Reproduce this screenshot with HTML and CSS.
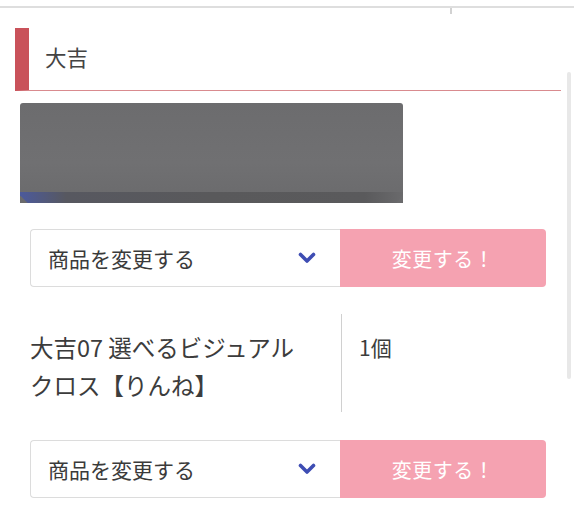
FILE: index.html
```html
<!DOCTYPE html>
<html lang="ja">
<head>
<meta charset="utf-8">
<link rel="stylesheet" href="styles.css">
</head>
<body>
<div class="page">
  <div class="topline"></div>
  <div class="scroll"></div>
  <div class="content">
    <h2 class="heading">大吉</h2>
    <div class="photo"><div class="photo-base"></div></div>
    <div class="change-row">
      <div class="select">
        <span>商品を変更する</span>
        <svg class="chev" width="18" height="12" viewBox="0 0 18 12"><polyline points="2.5,2.5 9,9 15.5,2.5" fill="none" stroke="#3e4db3" stroke-width="3.6" stroke-linecap="round" stroke-linejoin="round"/></svg>
      </div>
      <div class="button">変更する！</div>
    </div>
    <div class="item-row">
      <div class="item-name">大吉07 選べるビジュアルクロス【りんね】</div>
      <div class="item-qty">1個</div>
    </div>
    <div class="change-row second">
      <div class="select">
        <span>商品を変更する</span>
        <svg class="chev" width="18" height="12" viewBox="0 0 18 12"><polyline points="2.5,2.5 9,9 15.5,2.5" fill="none" stroke="#3e4db3" stroke-width="3.6" stroke-linecap="round" stroke-linejoin="round"/></svg>
      </div>
      <div class="button">変更する！</div>
    </div>
  </div>
</div>
</body>
</html>
```

FILE: styles.css
```css
* { box-sizing: border-box; }
html, body { margin: 0; padding: 0; background: #fff; }
body {
  font-family: "Noto Sans CJK JP", "Noto Sans", sans-serif;
  color: #3c3c3c;
}
.page { position: relative; width: 574px; height: 523px; overflow: hidden; }
.topline {
  position: relative;
  height: 8px;
  border-bottom: 2px solid #dedede;
}
.topline::after {
  content: "";
  position: absolute;
  left: 450px;
  top: 8px;
  width: 2px;
  height: 6px;
  background: #d2d2d2;
}
.scroll {
  position: absolute;
  left: 567px;
  top: 72px;
  width: 4px;
  height: 307px;
  background: #e8e8e8;
  border-radius: 2px;
}
.content { padding: 0 13px 0 15px; }
.heading {
  margin: 20px 0 0 0;
  height: 63px;
  border-left: 14px solid #c9525a;
  border-bottom: 1px solid #d98b8f;
  display: flex;
  align-items: center;
  padding: 0 0 5px 16px;
  font-size: 21.5px;
  font-weight: 400;
  color: #444;
}
.photo {
  position: relative;
  margin: 12px 0 0 5px;
  width: 383px;
  height: 100px;
  border-radius: 3px 3px 0 0;
  background: linear-gradient(180deg, #6c6c6e 0%, #707072 60%, #6a6a6c 100%);
}
.photo-base {
  position: absolute;
  left: 0;
  right: 0;
  bottom: 0;
  height: 11px;
  background: linear-gradient(90deg, #4c5a9c 0%, #575860 12%, #59595b 50%, #5a5a5c 90%, #6a6a6c 100%);
  clip-path: polygon(0 0, 100% 0, 100% 20%, 98.3% 100%, 2% 100%, 0 30%);
}
.change-row {
  margin: 26px 0 0 15px;
  display: flex;
  height: 58px;
  width: 516px;
}
.change-row.second { margin-top: 28px; }
.select {
  flex: 0 0 310px;
  border: 1px solid #dcdcdc;
  border-right: none;
  border-radius: 4px 0 0 4px;
  display: flex;
  align-items: center;
  justify-content: space-between;
  padding: 0 24px 0 17px;
  font-size: 21px;
  color: #3a3a3a;
}
.chev { display: block; }
.button {
  flex: 1;
  background: #f5a2b1;
  color: #fff;
  border-radius: 0 4px 4px 0;
  display: flex;
  align-items: center;
  justify-content: center;
  font-size: 20px;
  letter-spacing: 0.5px;
}
.item-row {
  margin: 27px 0 0 15px;
  display: grid;
  grid-template-columns: 312px 1fr;
  height: 98px;
}
.item-name {
  border-right: 1px solid #d0d0d0;
  padding: 14px 34px 0 0;
  font-size: 23.5px;
  line-height: 38px;
}
.item-qty {
  padding: 14px 0 0 17px;
  font-size: 21px;
  line-height: 38px;
}
```
